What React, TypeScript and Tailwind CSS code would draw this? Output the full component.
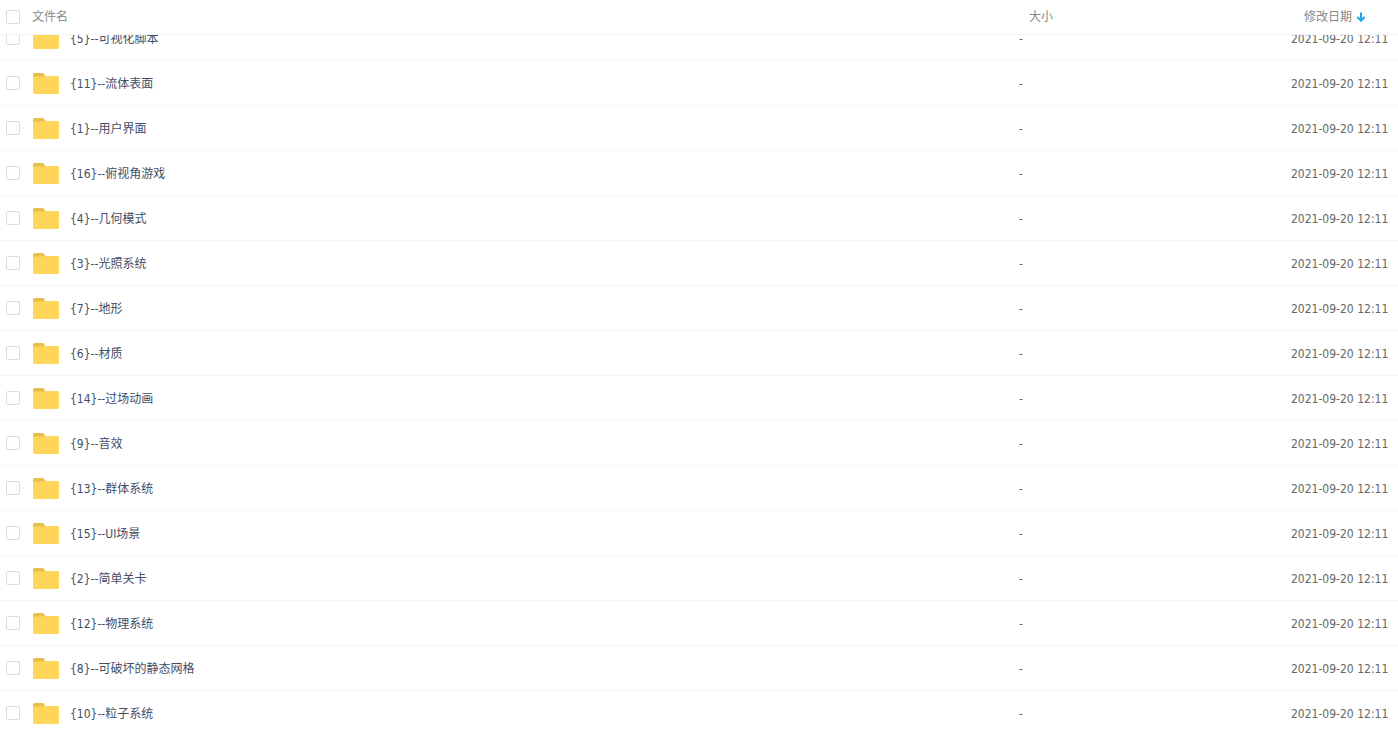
import { useLayoutEffect, useRef } from "react";

const FILES = [
  "{5}--可视化脚本",
  "{11}--流体表面",
  "{1}--用户界面",
  "{16}--俯视角游戏",
  "{4}--几何模式",
  "{3}--光照系统",
  "{7}--地形",
  "{6}--材质",
  "{14}--过场动画",
  "{9}--音效",
  "{13}--群体系统",
  "{15}--UI场景",
  "{2}--简单关卡",
  "{12}--物理系统",
  "{8}--可破坏的静态网格",
  "{10}--粒子系统",
];

const INITIAL_SCROLL = 19;

function Checkbox({ id, label }: { id: string; label?: string }) {
  return (
    <input
      id={id}
      type="checkbox"
      aria-label={label}
      className="size-[14px] shrink-0 appearance-none rounded-[2px] border border-[#dcdcdc] bg-white checked:border-[#09aaff] checked:bg-[#09aaff]"
    />
  );
}

function FolderIcon() {
  return (
    <svg width="26" height="22" viewBox="0 0 26 22" className="ml-[13px] shrink-0" aria-hidden="true">
      <path d="M0 6V1.6Q0 0 1.6 0H9.4Q10.6 0 11.1 .8L13 5V6Z" fill="#e9bf4b" />
      <path d="M0 3.6H10.6Q11.4 3.6 11.9 3.3T13 3H24.6Q26 3 26 4.4V19.6Q26 21 24.6 21H1.4Q0 21 0 19.6Z" fill="#ffd659" />
    </svg>
  );
}

function SortArrow() {
  return (
    <svg width="10" height="10" viewBox="0 0 10 10" aria-hidden="true">
      <path d="M5 0.5V8.5M1.3 5L5 8.7L8.7 5" fill="none" stroke="#1ea5ea" strokeWidth="2" />
    </svg>
  );
}

export default function App() {
  const scroller = useRef<HTMLDivElement>(null);

  useLayoutEffect(() => {
    if (scroller.current) scroller.current.scrollTop = INITIAL_SCROLL;
  }, []);

  return (
    <div
      ref={scroller}
      className="h-screen overflow-y-auto bg-white font-['DejaVu_Sans_Condensed','Noto_Sans_CJK_SC',sans-serif] text-xs text-[#666] [scrollbar-width:none]"
    >
      <table className="w-full table-fixed border-separate border-spacing-0 text-left">
        <colgroup>
          <col />
          <col className="w-[272px]" />
          <col className="w-[107px]" />
        </colgroup>
        <thead className="sticky top-0 z-10 bg-white text-[#888]">
          <tr className="h-[35px]">
            <th className="border-b border-[#f4f5f8] p-0 font-normal">
              <div className="flex items-center pl-1.5">
                <Checkbox id="select-all" label="全选" />
                <button type="button" className="ml-3">文件名</button>
              </div>
            </th>
            <th className="border-b border-[#f4f5f8] p-0 pl-2.5 font-normal">
              <button type="button">大小</button>
            </th>
            <th className="border-b border-[#f4f5f8] p-0 pl-[13px] font-normal">
              <button type="button" className="flex items-center gap-1 whitespace-nowrap">
                修改日期
                <SortArrow />
              </button>
            </th>
          </tr>
        </thead>
        <tbody>
          {FILES.map((name, i) => (
            <tr key={name} className="h-[45px] hover:bg-[#f4fbff]">
              <td className="border-b border-[#f4f5f8] p-0">
                <div className="flex items-center pl-1.5">
                  <Checkbox id={`file-${i}`} />
                  <label htmlFor={`file-${i}`} className="flex items-center gap-[11px] pt-0.5 text-[#424e67]">
                    <FolderIcon />
                    {name}
                  </label>
                </div>
              </td>
              <td className="border-b border-[#f4f5f8] p-0 pt-0.5">-</td>
              <td className="whitespace-nowrap border-b border-[#f4f5f8] p-0 pt-0.5">2021-09-20 12:11</td>
            </tr>
          ))}
        </tbody>
      </table>
    </div>
  );
}
